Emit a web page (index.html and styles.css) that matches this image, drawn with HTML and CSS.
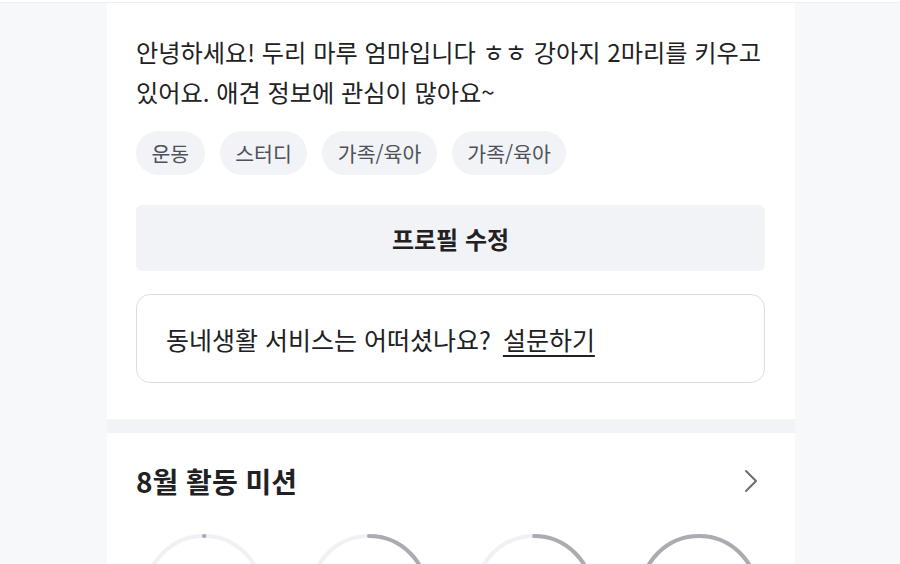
FILE: index.html
```html
<!DOCTYPE html>
<html lang="ko">
<head>
    <meta charset="utf-8">
    <title>나의 당근 - 프로필</title>
    <link rel="stylesheet" href="styles.css">
</head>
<body>
    <div class="topbar"></div>

    <main class="page">
        <section class="profile">
            <p class="intro">안녕하세요! 두리 마루 엄마입니다 ㅎㅎ 강아지 2마리를 키우고 있어요. 애견 정보에 관심이 많아요~</p>

            <ul class="tags">
                <li class="tag">운동</li>
                <li class="tag">스터디</li>
                <li class="tag">가족/육아</li>
                <li class="tag">가족/육아</li>
            </ul>

            <button class="edit-btn">프로필 수정</button>

            <div class="survey">
                <span>동네생활 서비스는 어떠셨나요?</span>
                <a href="#" class="survey-link">설문하기</a>
            </div>
        </section>

        <div class="divider"></div>

        <section class="mission">
            <div class="mission-head">
                <h2>8월 활동 미션</h2>
                <svg class="chevron" width="14" height="24" viewBox="0 0 14 24">
                    <path d="M2 2 L12 12 L2 22" fill="none" stroke="#6b6e75" stroke-width="2" stroke-linecap="round" stroke-linejoin="round"/>
                </svg>
            </div>

            <div class="rings">
                <!-- circumference of r=58: 364.4 -->
                <div class="ring">
                    <svg width="120" height="120" viewBox="0 0 120 120">
                        <circle cx="60" cy="60" r="58" class="track"/>
                        <circle cx="60" cy="60" r="58" class="progress" stroke-dasharray="0.5 364.4"/>
                    </svg>
                </div>
                <div class="ring">
                    <svg width="120" height="120" viewBox="0 0 120 120">
                        <circle cx="60" cy="60" r="58" class="track"/>
                        <circle cx="60" cy="60" r="58" class="progress" stroke-dasharray="110 364.4"/>
                    </svg>
                </div>
                <div class="ring">
                    <svg width="120" height="120" viewBox="0 0 120 120">
                        <circle cx="60" cy="60" r="58" class="track"/>
                        <circle cx="60" cy="60" r="58" class="progress" stroke-dasharray="95 364.4"/>
                    </svg>
                </div>
                <div class="ring">
                    <svg width="120" height="120" viewBox="0 0 120 120">
                        <circle cx="60" cy="60" r="58" class="track"/>
                        <circle cx="60" cy="60" r="58" class="progress" stroke-dasharray="364.4 364.4"/>
                    </svg>
                </div>
            </div>
        </section>
    </main>
</body>
</html>
```

FILE: styles.css
```css
body {
    margin: 0;
    background-color: #f7f8fa;
    font-family: "Noto Sans CJK KR", "Noto Sans", sans-serif;
    color: #212124;
}
.topbar {
    height: 2px;
    background-color: #fff;
    border-bottom: 1px solid #eeeff1;
}
.page {
    width: 688px;
    margin: 0 auto;
    background-color: #fff;
    position: relative;
    left: 1px;
}
.profile {
    padding: 29px 30px 36px 29px;
}
.intro {
    margin: 0;
    font-size: 24.2px;
    line-height: 40px;
}
.tags {
    list-style: none;
    margin: 19px 0 0;
    padding: 0;
    display: flex;
    gap: 15px;
}
.tag {
    background-color: #f2f3f6;
    color: #4d5159;
    font-size: 20.5px;
    line-height: 44px;
    padding: 0 15.5px;
    border-radius: 22px;
}
.edit-btn {
    display: block;
    width: 100%;
    margin-top: 30px;
    height: 66px;
    border: none;
    border-radius: 6px;
    background-color: #f2f3f6;
    color: #212124;
    font-family: inherit;
    font-size: 24px;
    font-weight: bold;
}
.survey {
    margin-top: 23px;
    height: 87px;
    border: 1.5px solid #dcdee3;
    border-radius: 14px;
    padding: 0 29px;
    display: flex;
    align-items: center;
    gap: 12px;
    font-size: 25px;
    color: #212124;
}
.survey-link {
    color: #212124;
    text-decoration: underline;
    text-underline-offset: 5px;
}
.divider {
    height: 14px;
    background-color: #f2f3f6;
}
.mission {
    padding: 28px 30px 0 29px;
}
.mission-head {
    display: flex;
    justify-content: space-between;
    align-items: center;
}
.mission-head h2 {
    margin: 0;
    font-size: 28px;
    font-weight: bold;
    line-height: 40px;
}
.chevron {
    margin-right: 7px;
}
.rings {
    display: flex;
    justify-content: center;
    margin-top: 33px;
    margin-left: -29px;
    margin-right: -30px;
}
.ring {
    width: 165px;
    display: flex;
    justify-content: center;
}
.ring svg {
    transform: rotate(-90deg);
}
.track {
    fill: none;
    stroke: #f0f1f4;
    stroke-width: 4;
}
.progress {
    fill: none;
    stroke: #aaacb1;
    stroke-width: 4;
    stroke-linecap: round;
}
```
